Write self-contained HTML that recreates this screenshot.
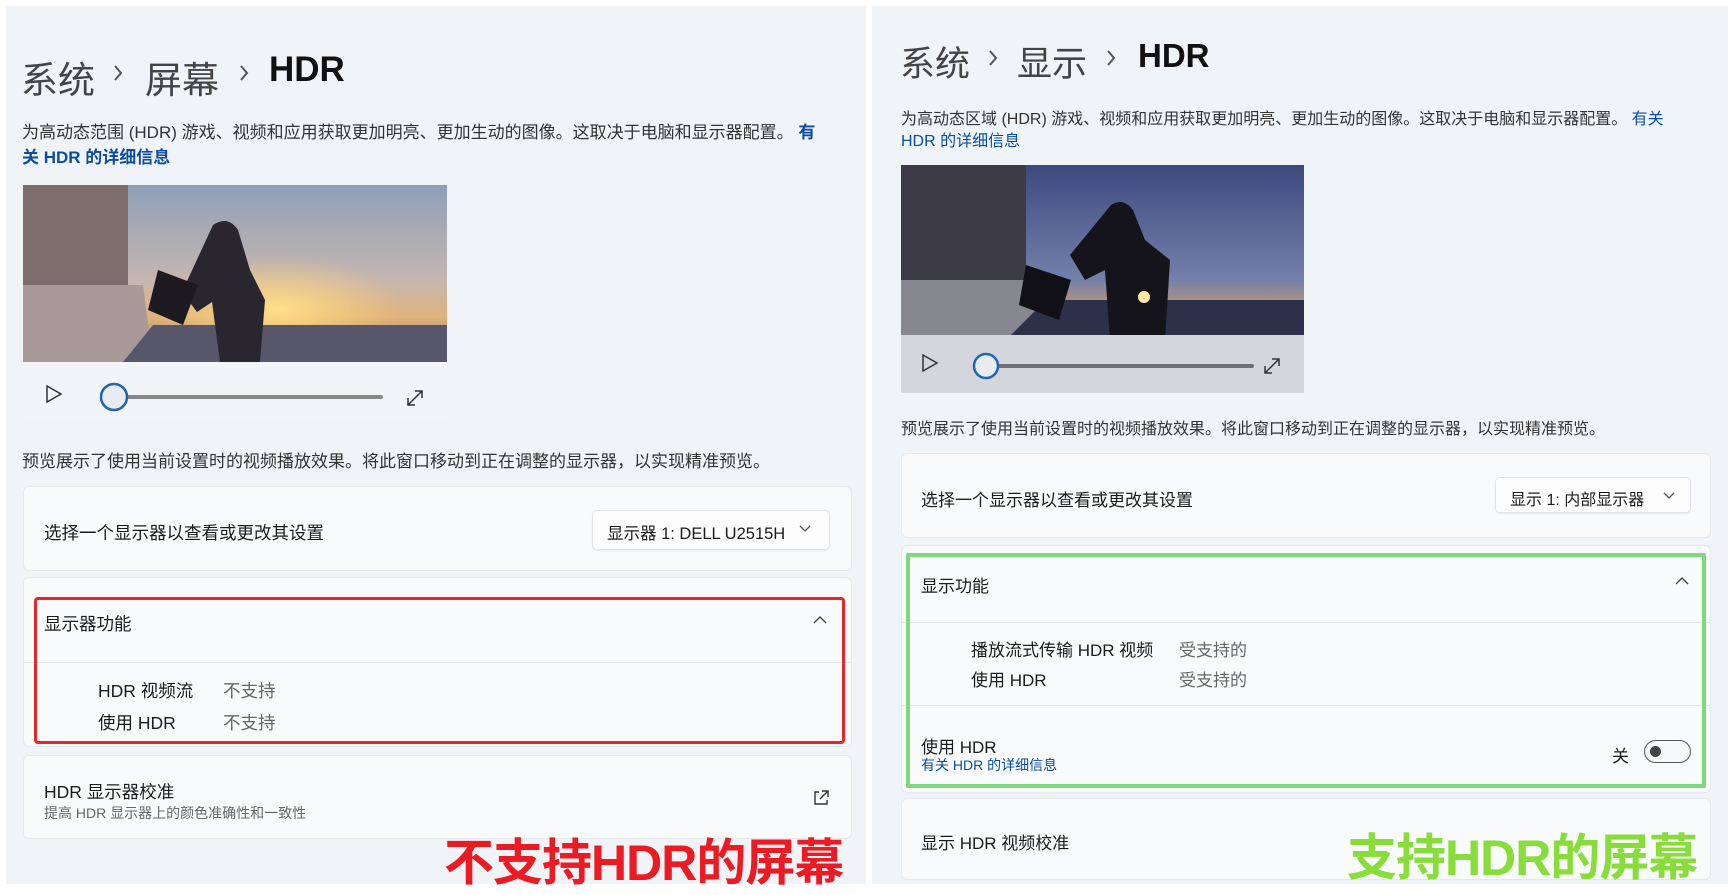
<!DOCTYPE html>
<html><head><meta charset="utf-8"><style>
*{margin:0;padding:0;box-sizing:border-box}
body{width:1733px;height:890px;background:#fff;position:relative;overflow:hidden;font-family:"Liberation Sans","Noto Sans CJK SC",sans-serif;color:#1b1b1b}
.a{position:absolute;white-space:nowrap}
.panel{position:absolute;background:#eff3f8}
.card{position:absolute;background:#f9fafc;border:1px solid #e6e8ec;border-radius:6px}
.dd{position:absolute;background:#fdfdfe;border:1px solid #e2e4e8;border-radius:5px;box-shadow:0 1px 1px rgba(0,0,0,.08)}
.t{font-size:37px}
.g{color:#666}
</style></head><body>
<div class="panel" style="left:6px;top:6px;width:860px;height:878px;background:#f0f3f8"></div>
<div class="panel" style="left:872px;top:6px;width:856px;height:878px;background:#eef4f8"></div>

<!-- LEFT -->
<div class="a t" style="left:21px;top:50px;color:#444">系统</div>
<svg class="a" style="left:112px;top:64px" width="12" height="18"><path d="M3 2l6 7-6 7" fill="none" stroke="#555" stroke-width="2"/></svg>
<div class="a t" style="left:145px;top:50px;color:#444">屏幕</div>
<svg class="a" style="left:238px;top:64px" width="12" height="18"><path d="M3 2l6 7-6 7" fill="none" stroke="#555" stroke-width="2"/></svg>
<div class="a t" style="left:269px;top:50px;font-weight:bold;color:#111;font-size:35px">HDR</div>
<div class="a" style="left:22px;top:118px;font-size:17px;color:#333">为高动态范围 (HDR) 游戏、视频和应用获取更加明亮、更加生动的图像。这取决于电脑和显示器配置。 <b style="color:#0a4d9e">有</b></div>
<div class="a" style="left:22px;top:143px;font-size:17px;color:#0a4d9e;font-weight:bold">关 HDR 的详细信息</div>

<svg class="a" style="left:23px;top:185px" width="424" height="177" viewBox="0 0 424 177">
<defs><linearGradient id="sky" x1="0" y1="0" x2="0" y2="1"><stop offset="0" stop-color="#8e9fb9"/><stop offset=".55" stop-color="#c7b6b0"/><stop offset=".75" stop-color="#e0b37a"/><stop offset="1" stop-color="#6e6c78"/></linearGradient>
<radialGradient id="sun" cx=".6" cy=".7" r=".3"><stop offset="0" stop-color="#ffe08a"/><stop offset="1" stop-color="#ffd070" stop-opacity="0"/></radialGradient></defs>
<rect width="424" height="177" fill="url(#sky)"/><rect width="424" height="177" fill="url(#sun)"/>
<path d="M0 0h105v177H0z" fill="#7c6e6a"/><path d="M0 100h120l10 77H0z" fill="#a79a98"/>
<path d="M130 140h294v37H100z" fill="#57566a"/>
<path d="M190 40q15-10 25 5l12 40 15 30-5 62h-40l-8-60-15 10-15-20z" fill="#2a2630"/>
<path d="M135 85l40 15-15 40-35-15z" fill="#1d1a22"/>
</svg>
<div class="a" style="left:23px;top:362px;width:424px;height:58px;background:#f3f4f7"></div>
<svg class="a" style="left:23px;top:362px" width="424" height="58"><path d="M24 24l14 8-14 8z" fill="none" stroke="#333" stroke-width="1.5"/><rect x="90" y="33" width="270" height="4" rx="2" fill="#888"/><circle cx="91" cy="35" r="13" fill="#e8ebef" stroke="#1f65b0" stroke-width="2.5"/><path d="M385 43l14-14M385 36v7h7M399 36v-7h-7" fill="none" stroke="#333" stroke-width="1.5"/></svg>

<div class="a" style="left:22px;top:447px;font-size:17px;color:#333">预览展示了使用当前设置时的视频播放效果。将此窗口移动到正在调整的显示器，以实现精准预览。</div>

<div class="card" style="left:23px;top:486px;width:829px;height:85px"></div>
<div class="a" style="left:44px;top:520px;font-size:17.5px">选择一个显示器以查看或更改其设置</div>
<div class="dd" style="left:592px;top:510px;width:238px;height:40px"></div>
<div class="a" style="left:607px;top:520px;font-size:16.5px">显示器 1: DELL U2515H</div>
<svg class="a" style="left:799px;top:525px" width="12" height="8"><path d="M1 1l5 5 5-5" fill="none" stroke="#555" stroke-width="1.3"/></svg>

<div class="card" style="left:23px;top:577px;width:829px;height:170px"></div>
<div style="position:absolute;left:24px;top:662px;width:827px;height:1px;background:#e4e6ea"></div>
<div class="a" style="left:44px;top:611px;font-size:17.5px">显示器功能</div>
<svg class="a" style="left:813px;top:615px" width="14" height="9"><path d="M1 8l6-6 6 6" fill="none" stroke="#444" stroke-width="1.4"/></svg>
<div class="a" style="left:98px;top:678px;font-size:17.5px">HDR 视频流</div>
<div class="a g" style="left:223px;top:678px;font-size:17.5px">不支持</div>
<div class="a" style="left:98px;top:710px;font-size:17.5px">使用 HDR</div>
<div class="a g" style="left:223px;top:710px;font-size:17.5px">不支持</div>
<div class="a" style="left:34px;top:597px;width:811px;height:147px;border:3px solid #e5262b;border-radius:4px"></div>

<div class="card" style="left:23px;top:755px;width:829px;height:84px"></div>
<div class="a" style="left:44px;top:779px;font-size:17.5px">HDR 显示器校准</div>
<div class="a g" style="left:44px;top:803px;font-size:14px">提高 HDR 显示器上的颜色准确性和一致性</div>
<svg class="a" style="left:812px;top:789px" width="18" height="18"><path d="M7 3H3v12h12v-4M10 2h6v6M16 2L8 10" fill="none" stroke="#333" stroke-width="1.4"/></svg>
<div class="a" style="left:444px;top:823px;font-size:50px;font-weight:bold;color:#ea1b22;letter-spacing:-1px">不支持HDR的屏幕</div>

<!-- RIGHT -->
<div class="a" style="left:900px;top:36px;font-size:35px;color:#444">系统</div>
<svg class="a" style="left:987px;top:49px" width="12" height="18"><path d="M3 2l6 7-6 7" fill="none" stroke="#555" stroke-width="2"/></svg>
<div class="a" style="left:1017px;top:36px;font-size:35px;color:#444">显示</div>
<svg class="a" style="left:1105px;top:49px" width="12" height="18"><path d="M3 2l6 7-6 7" fill="none" stroke="#555" stroke-width="2"/></svg>
<div class="a" style="left:1138px;top:37px;font-size:33px;font-weight:bold;color:#111">HDR</div>
<div class="a" style="left:901px;top:105px;font-size:16px;color:#333">为高动态区域 (HDR) 游戏、视频和应用获取更加明亮、更加生动的图像。这取决于电脑和显示器配置。 <span style="color:#0a4d9e">有关</span></div>
<div class="a" style="left:901px;top:127px;font-size:16px;color:#0a4d9e">HDR 的详细信息</div>

<svg class="a" style="left:901px;top:165px" width="403" height="228" viewBox="0 0 403 228">
<defs><linearGradient id="sky2" x1="0" y1="0" x2="0" y2="1"><stop offset="0" stop-color="#3d4a7e"/><stop offset=".5" stop-color="#7380ab"/><stop offset=".68" stop-color="#d9a066"/><stop offset="1" stop-color="#2a3050"/></linearGradient></defs>
<rect width="403" height="228" fill="url(#sky2)"/>
<path d="M0 0h125v170H0z" fill="#3d3b46"/><path d="M0 115h125l20 55H0z" fill="#86878f"/>
<path d="M145 135h258v35H110z" fill="#2c3048"/>
<path d="M210 40q12-8 22 5l12 30 25 20-5 80h-55l-5-70-20 10-15-25z" fill="#15141b"/>
<path d="M125 100l45 15-12 40-40-15z" fill="#101016"/>
<circle cx="243" cy="132" r="6" fill="#ffe9a0"/>
<rect y="170" width="403" height="58" fill="#d3d6dc"/>
<path d="M22 190l14 8-14 8z" fill="none" stroke="#333" stroke-width="1.5"/>
<rect x="95" y="199" width="258" height="4" rx="2" fill="#6e7076"/><circle cx="85" cy="201" r="12" fill="#e8ebef" stroke="#1f65b0" stroke-width="2.5"/>
<path d="M364 208l14-14M364 201v7h7M378 201v-7h-7" fill="none" stroke="#333" stroke-width="1.5"/>
</svg>

<div class="a" style="left:901px;top:415px;font-size:16px;color:#333">预览展示了使用当前设置时的视频播放效果。将此窗口移动到正在调整的显示器，以实现精准预览。</div>

<div class="card" style="left:901px;top:453px;width:810px;height:85px"></div>
<div class="a" style="left:921px;top:486px;font-size:17px">选择一个显示器以查看或更改其设置</div>
<div class="dd" style="left:1495px;top:477px;width:196px;height:36px"></div>
<div class="a" style="left:1510px;top:486px;font-size:16px">显示 1: 内部显示器</div>
<svg class="a" style="left:1663px;top:492px" width="12" height="8"><path d="M1 1l5 5 5-5" fill="none" stroke="#555" stroke-width="1.3"/></svg>

<div class="card" style="left:901px;top:545px;width:810px;height:248px"></div>
<div style="position:absolute;left:902px;top:622px;width:808px;height:1px;background:#e4e6ea"></div>
<div style="position:absolute;left:902px;top:705px;width:808px;height:1px;background:#e4e6ea"></div>
<div class="a" style="left:921px;top:572px;font-size:17px">显示功能</div>
<svg class="a" style="left:1675px;top:576px" width="14" height="9"><path d="M1 8l6-6 6 6" fill="none" stroke="#444" stroke-width="1.4"/></svg>
<div class="a" style="left:971px;top:636px;font-size:17px">播放流式传输 HDR 视频</div>
<div class="a g" style="left:1179px;top:636px;font-size:17px">受支持的</div>
<div class="a" style="left:971px;top:666px;font-size:17px">使用 HDR</div>
<div class="a g" style="left:1179px;top:666px;font-size:17px">受支持的</div>
<div class="a" style="left:921px;top:733px;font-size:17px">使用 HDR</div>
<div class="a" style="left:921px;top:755px;font-size:14px;color:#0a4d9e">有关 HDR 的详细信息</div>
<div class="a" style="left:1612px;top:742px;font-size:17px">关</div>
<div class="a" style="left:1644px;top:740px;width:47px;height:23px;border:1.5px solid #555;border-radius:12px;background:#f7f8fa"></div>
<div class="a" style="left:1650px;top:746px;width:11px;height:11px;border-radius:50%;background:#444"></div>
<div class="a" style="left:906px;top:553px;width:800px;height:235px;border:4px solid #7ed97e;border-radius:2px"></div>

<div class="card" style="left:901px;top:798px;width:810px;height:82px"></div>
<div class="a" style="left:921px;top:829px;font-size:17px">显示 HDR 视频校准</div>
<div class="a" style="left:1347px;top:818px;font-size:50px;font-weight:bold;color:#88dd3a;letter-spacing:-1px">支持HDR的屏幕</div>
</body></html>
